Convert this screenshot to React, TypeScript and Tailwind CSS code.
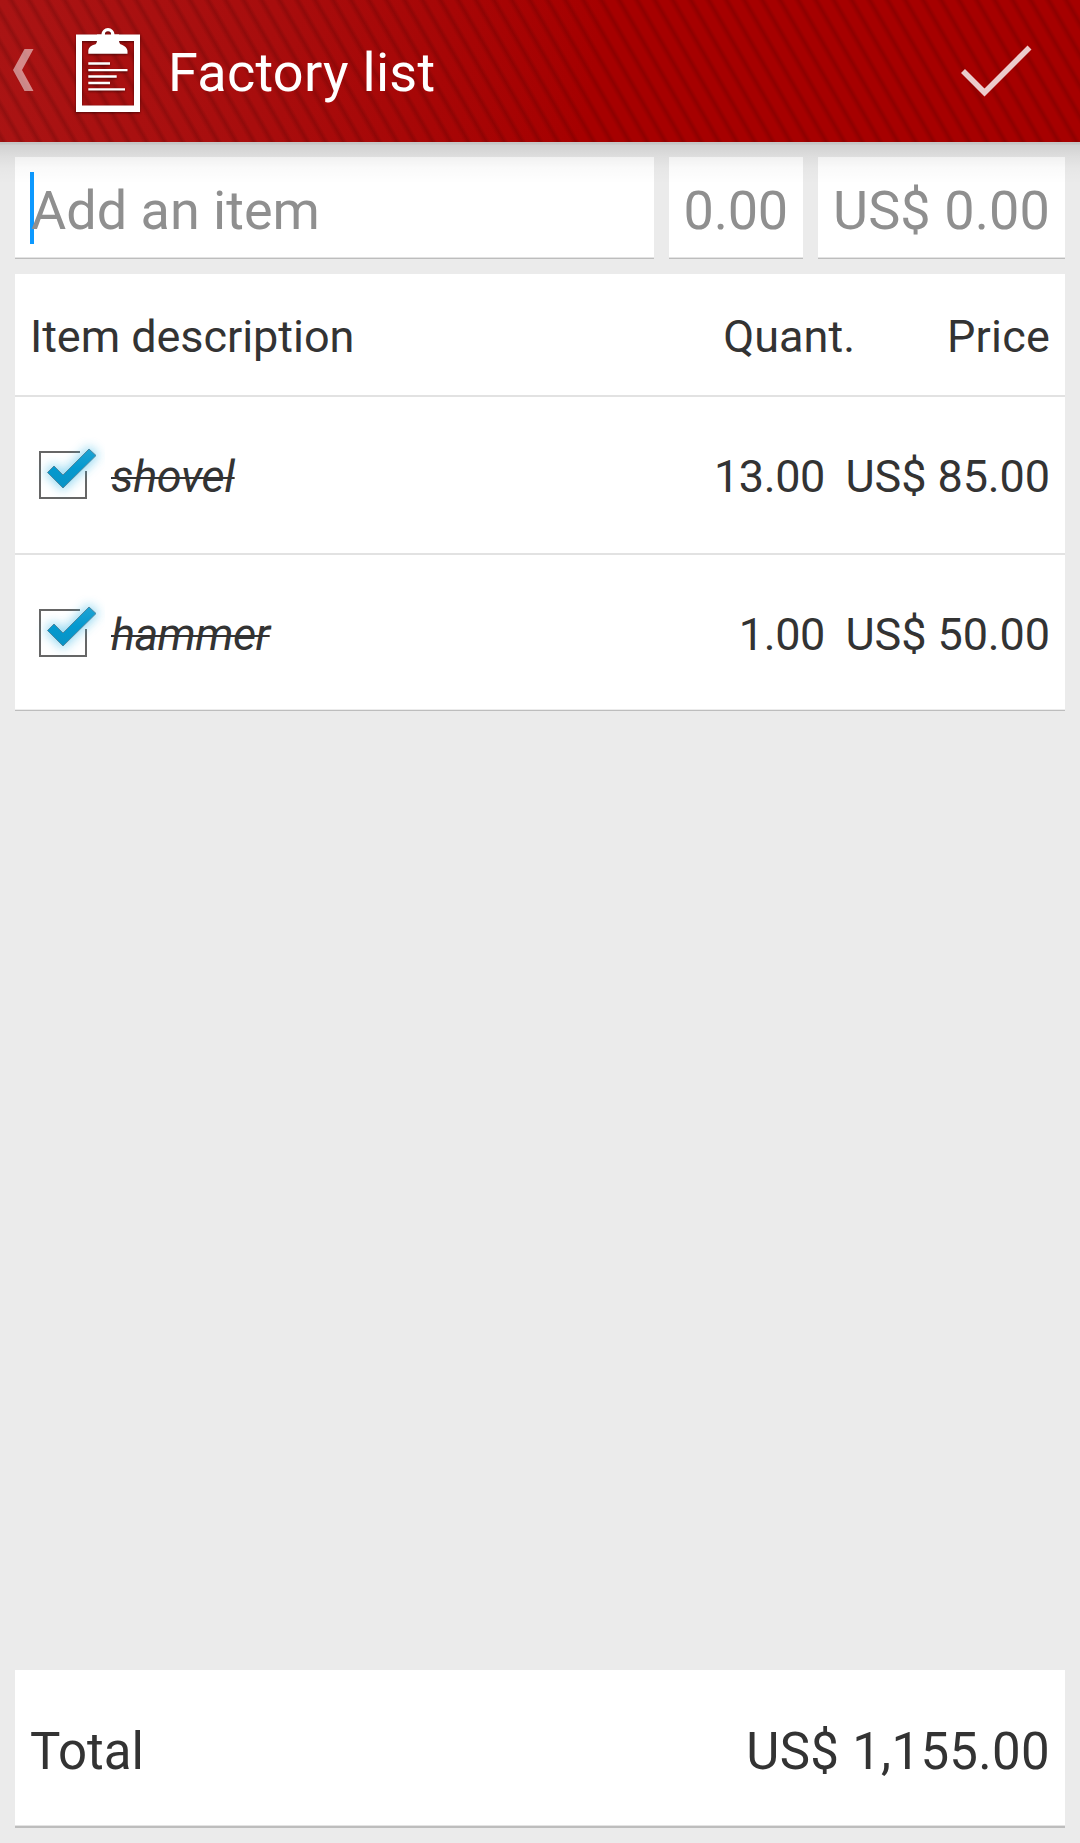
import React from "react";

function ClipboardIcon() {
  return (
    <svg className="mb-[3px] ml-[41px] h-[88px] w-[66px] shrink-0 drop-shadow-[0_1px_1px_rgba(0,0,0,0.5)]" viewBox="75 26 66 88">
      <path fill="#fff" fillRule="evenodd" d="M76 34.5H140V112H76ZM82 41V105.500H134V41Z" />
      <path
        fill="#fff"
        fillRule="evenodd"
        d="M88.300 53.700V51C88.300 48 91 45 95.500 44.200C96.500 43.500 97 42 97 40V34.500H101.500C101.500 31 104.500 28 108 28C111.500 28 114.500 31 114.500 34.500H119V40C119 42 119.500 43.500 120.500 44.200C124.500 45.500 127.500 48 127.500 51V53.700ZM108 31.200A3.100 3.100 0 1 0 108 37.400A3.100 3.100 0 1 0 108 31.200Z"
      />
      <path stroke="#fff" strokeWidth="2.4" d="M88.300 63.500H110M88.300 70.100H127.500M88.300 76.500H116.700M88.300 83H110M88.300 89.400H125" />
    </svg>
  );
}

function CheckedBox() {
  return (
    <svg className="-ml-[5px] h-[80px] w-[80px] shrink-0" viewBox="25 435 80 80">
      <defs>
        <linearGradient id="tick" x1="0" y1="0" x2="0" y2="1">
          <stop offset="0" stopColor="#1fa3d3" />
          <stop offset="0.5" stopColor="#0499cf" />
          <stop offset="1" stopColor="#0a93c4" />
        </linearGradient>
        <filter id="glow" x="-50%" y="-50%" width="200%" height="200%">
          <feGaussianBlur stdDeviation="5.5" />
        </filter>
      </defs>
      <path d="M80 452H40V498H86V471" fill="none" stroke="#666" strokeWidth="2" />
      <path
        d="M47.500 472.500L54 466L63 475L89 449L96 455.500L63 488Z"
        fill="#33b5e5"
        stroke="#33b5e5"
        strokeWidth="4"
        opacity="0.55"
        filter="url(#glow)"
      />
      <path d="M47.500 472.500L54 466L63 475L89 449L96 455.500L63 488Z" fill="url(#tick)" stroke="#4d87a0" strokeWidth="1" />
    </svg>
  );
}

const items = [
  { name: "shovel", spacing: "tracking-[-0.35px]", qty: "13.00", price: "US$ 85.00" },
  { name: "hammer", spacing: "tracking-[-0.6px]", qty: "1.00", price: "US$ 50.00" },
];

export default function App() {
  return (
    <div className="relative flex h-[1843px] w-[1080px] flex-col overflow-hidden bg-[#ebebeb] font-['Roboto',sans-serif] text-[#333]">
      <header className="flex h-[142px] shrink-0 items-center bg-[repeating-linear-gradient(60deg,rgba(60,0,0,0.06)_0px,rgba(60,0,0,0.21)_3.2px,rgba(60,0,0,0)_7px,rgba(60,0,0,0)_14px,rgba(60,0,0,0.06)_15.49px),linear-gradient(100deg,#aa1414_0%,#a80d0d_25%,#a60000_55%,#a60000_100%)]">
        <svg className="mb-[2px] ml-[13px] h-[42px] w-[21px] shrink-0" viewBox="0 0 21 42">
          <path d="M11.500 0H20.500L9 21L20.500 42H11.500L0 21Z" fill="#fff" opacity="0.5" />
        </svg>
        <ClipboardIcon />
        <h1 className="ml-[27px] flex-1 pt-[3px] text-[54px] leading-[64px] tracking-[0.28px] text-white">Factory list</h1>
        <svg className="mr-[48px] mb-[1px] h-[54px] w-[72px] shrink-0" viewBox="960 43 72 54">
          <path d="M963 70L984.500 91.500L1029.500 46.500" fill="none" stroke="#fff" strokeOpacity="0.8" strokeWidth="5.600" />
        </svg>
      </header>

      <div className="pointer-events-none absolute inset-x-0 top-[142px] h-[42px] bg-[linear-gradient(to_bottom,rgba(0,0,0,0.16)_0px,rgba(0,0,0,0.16)_2px,rgba(0,0,0,0.11)_3px,rgba(0,0,0,0.055)_15px,rgba(0,0,0,0.02)_26px,rgba(0,0,0,0)_42px)]" />

      <main className="flex flex-1 flex-col px-[15px] pt-[15px] pb-[15px]">
        <div className="flex h-[102px] gap-[15px] text-[54px] leading-[64px] text-[#8f8f8f]">
          <div className="flex flex-1 items-center border-b border-[#bdbdbd] bg-white pl-[15px] shadow-[inset_0_-1px_0_#e3e3e3]">
            <span className="h-[72px] w-[4px] bg-[#0d99ff]" />
            <span className="-ml-[3px] pt-[6px]">Add an item</span>
          </div>
          <div className="flex w-[134px] items-center justify-end border-b border-[#bdbdbd] bg-white pt-[6px] pr-[15px] tracking-[-0.2px] shadow-[inset_0_-1px_0_#e3e3e3]">0.00</div>
          <div className="flex w-[247px] items-center justify-end border-b border-[#bdbdbd] bg-white pt-[6px] pr-[15px] tracking-[0.1px] whitespace-nowrap shadow-[inset_0_-1px_0_#e3e3e3]">US$ 0.00</div>
        </div>

        <section className="mt-[15px] border-b border-[#bdbdbd] bg-white text-[45px] leading-[54px] shadow-[inset_0_-1px_0_#ececec]">
          <div className="flex h-[123px] items-center border-b-2 border-[#e2e2e2] px-[15px] pt-[5px]">
            <span className="flex-1 tracking-[-0.05px]">Item description</span>
            <span>Quant.</span>
            <span className="w-[195px] text-right tracking-[0.2px]">Price</span>
          </div>
          {items.map((item, i) => (
            <div key={item.name} className={`flex items-center px-[15px] ${i === 0 ? "h-[158px] border-b-2 border-[#e2e2e2]" : "h-[155px]"}`}>
              <CheckedBox />
              <span className="ml-[6px] flex-1 pt-[4px]">
                <span className={`italic line-through decoration-2 ${item.spacing}`}>{item.name}</span>
              </span>
              <span className="pt-[4px] tracking-[-0.4px]">{item.qty}</span>
              <span className="w-[225px] pt-[4px] text-right tracking-[-0.1px]">{item.price}</span>
            </div>
          ))}
        </section>

        <section className="mt-auto flex h-[158px] items-center justify-between border-b-2 border-[#bdbdbd] bg-white px-[15px] pt-[7px] text-[51px] leading-[60px] shadow-[inset_0_-1px_0_#e3e3e3]">
          <span>Total</span>
          <span className="tracking-[0.3px]">US$ 1,155.00</span>
        </section>
      </main>
    </div>
  );
}
